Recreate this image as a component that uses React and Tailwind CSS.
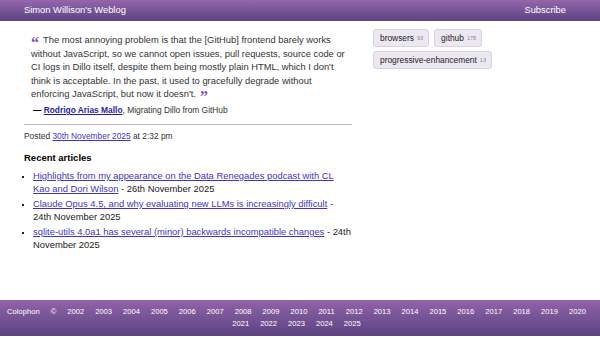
export default function App() {
  const years = [];
  for (let y = 2002; y <= 2025; y++) years.push(y);

  const articles = [
    {
      title: "Highlights from my appearance on the Data Renegades podcast with CL Kao and Dori Wilson",
      date: "26th November 2025",
    },
    {
      title: "Claude Opus 4.5, and why evaluating new LLMs is increasingly difficult",
      date: "24th November 2025",
    },
    {
      title: "sqlite-utils 4.0a1 has several (minor) backwards incompatible changes",
      date: "24th November 2025",
    },
  ];

  const tags = [
    { name: "browsers", count: 93 },
    { name: "github", count: 178 },
    { name: "progressive-enhancement", count: 13 },
  ];

  return (
    <div className="min-h-screen bg-white font-['Liberation_Sans',Arial,sans-serif] text-[#222]">
      {/* Header */}
      <header className="h-[21px] bg-gradient-to-b from-[#9566ab] to-[#5c4382] flex items-center justify-between pl-[24px] pr-[34px] text-white text-[9.35px]">
        <span>Simon Willison's Weblog</span>
        <span>Subscribe</span>
      </header>

      {/* Main */}
      <div className="min-h-[279px] flex pl-[24px] pr-[24px]">
        <div className="w-[328px] shrink-0">
          <blockquote className="mt-[13px] pl-[7px] text-[9.35px] leading-[13.6px] text-[#333]">
            <span className="relative top-[5px] leading-[0] mr-[4px] font-['Liberation_Serif',serif] text-[16px] font-bold text-[#7b4fc4]">
              “
            </span>
            The most annoying problem is that the [GitHub] frontend barely works
            without JavaScript, so we cannot open issues, pull requests, source
            code or CI logs in Dillo itself, despite them being mostly plain
            HTML, which I don't think is acceptable. In the past, it used to
            gracefully degrade without enforcing JavaScript, but now it doesn't.
            <span className="relative top-[5px] leading-[0] ml-[4px] font-['Liberation_Serif',serif] text-[16px] font-bold text-[#7b4fc4]">
              ”
            </span>
          </blockquote>
          <p className="pl-[9px] mt-[2px] text-[8.4px] leading-[12px] text-[#333]">
            <span className="font-bold text-black">— </span>
            <a href="#" className="font-bold text-[#1f1f9e] underline">
              Rodrigo Arias Mallo
            </a>
            , Migrating Dillo from GitHub
          </p>

          <div className="mt-[8px] border-t border-[#c2b2db]" />

          <p className="mt-[5px] text-[8.4px] leading-[12px] text-[#333]">
            Posted{" "}
            <a href="#" className="text-[#3e36c0] underline">
              30th November 2025
            </a>{" "}
            at 2:32 pm
          </p>

          <h3 className="mt-[10px] font-bold text-[9.5px] leading-[12px] text-black">
            Recent articles
          </h3>

          <ul className="mt-[6px] list-[square] pl-[9px] text-[9.4px] leading-[12.6px]">
            {articles.map((a) => (
              <li key={a.title} className="mb-[2.8px] marker:text-[7px]">
                <a href="#" className="text-[#3e36c0] underline">
                  {a.title}
                </a>{" "}
                - {a.date}
              </li>
            ))}
          </ul>
        </div>

        <div className="ml-[21px] flex-1">
          <div className="mt-[8px] flex flex-wrap gap-x-[5px] gap-y-[4px] w-[200px]">
            {tags.map((t) => (
              <span
                key={t.name}
                className="h-[18px] flex items-center pl-[6px] pr-[5px] rounded-[3px] border border-[#d8d0e3] bg-[#ece8f2] text-[8.4px] text-[#222]"
              >
                {t.name}
                <span className="ml-[3px] text-[5.5px] text-[#888]">{t.count}</span>
              </span>
            ))}
          </div>
        </div>
      </div>

      {/* Footer */}
      <footer className="h-[36px] bg-gradient-to-b from-[#9263a8] to-[#5c4382] text-white text-[7.6px] leading-[12px] pt-[6px] pl-[5px] pr-[12px]">
        <div className="flex flex-wrap justify-center gap-x-[11px]">
          <span>Colophon</span>
          <span>©</span>
          {years.map((y) => (
            <span key={y}>{y}</span>
          ))}
        </div>
      </footer>
    </div>
  );
}
